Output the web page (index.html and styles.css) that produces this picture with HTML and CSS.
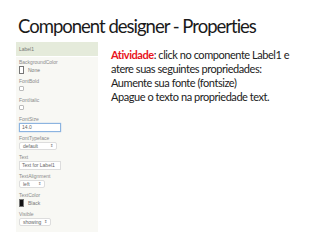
FILE: index.html
```html
<!DOCTYPE html>
<html lang="pt">
<head>
    <meta charset="UTF-8">
    <title>Component designer - Properties</title>
    <link rel="stylesheet" href="styles.css">
</head>
<body>
    <h1 class="title">Component designer - Properties</h1>

    <div class="content">
        <div class="props">
            <div class="props-head">Label1</div>
            <div class="prop">
                <span class="prop-name">BackgroundColor</span>
                <div class="color-row"><span class="swatch"></span>None</div>
            </div>
            <div class="prop">
                <span class="prop-name">FontBold</span>
                <span class="check"></span>
            </div>
            <div class="prop">
                <span class="prop-name">FontItalic</span>
                <span class="check"></span>
            </div>
            <div class="prop">
                <span class="prop-name">FontSize</span>
                <span class="field field-size focus">14.0</span>
            </div>
            <div class="prop">
                <span class="prop-name">FontTypeface</span>
                <span class="select select-face">default <b>&#8661;</b></span>
            </div>
            <div class="prop">
                <span class="prop-name">Text</span>
                <span class="field field-text">Text for Label1</span>
            </div>
            <div class="prop">
                <span class="prop-name">TextAlignment</span>
                <span class="select select-align">left <b>&#8661;</b></span>
            </div>
            <div class="prop">
                <span class="prop-name">TextColor</span>
                <div class="color-row"><span class="swatch black"></span>Black</div>
            </div>
            <div class="prop">
                <span class="prop-name">Visible</span>
                <span class="select select-vis">showing <b>&#8661;</b></span>
            </div>
        </div>

        <div class="task">
            <p><span class="red">Atividade</span>: click no componente Label1 e<br>atere suas seguintes propriedades:</p>
            <p>Aumente sua fonte (fontsize)</p>
            <p>Apague o texto na propriedade text.</p>
        </div>
    </div>
</body>
</html>
```

FILE: styles.css
```css
* {
    margin: 0;
    padding: 0;
    box-sizing: border-box;
}

body {
    font-family: 'Lato', 'Liberation Sans', sans-serif;
    background: #fff;
    color: #222;
    width: 320px;
    height: 240px;
    overflow: hidden;
}

/* Title */
.title {
    font-size: 18.5px;
    letter-spacing: -1px;
    font-weight: normal;
    line-height: 24px;
    padding: 14px 0 0 18px;
    height: 42px;
    color: #1a1a1a;
}

.content {
    display: flex;
}

/* Properties panel */
.props {
    flex-shrink: 0;
    width: 82px;
    margin-left: 16px;
    height: 190px;
    background: #f8f8f4;
    font-family: 'Liberation Sans', sans-serif;
    font-size: 5px;
    color: #555;
}

.props-head {
    background: #e5ebdb;
    height: 15px;
    line-height: 15px;
    padding-left: 3px;
    color: #777;
    border-bottom: 1px solid #fff;
}

.prop {
    display: flex;
    flex-direction: column;
    align-items: flex-start;
    padding: 2px 0 0 3px;
    height: 19px;
}

.prop-name {
    color: #8a8a8a;
    line-height: 7px;
}

.color-row {
    display: flex;
    align-items: center;
    gap: 4px;
    color: #777;
}

.swatch {
    width: 5px;
    height: 8px;
    border: 1px solid #777;
    background: #fff;
}

.swatch.black {
    background: #111;
}

.check {
    width: 5px;
    height: 5px;
    border: 1px solid #bbb;
    border-radius: 1px;
    background: #fff;
    margin-top: 1px;
}

.field {
    height: 9px;
    line-height: 7px;
    padding-left: 2px;
    border: 1px solid #ddd;
    background: #fff;
    color: #666;
}

.field-size {
    width: 42px;
}

.field-text {
    width: 42px;
}

.focus {
    border-color: #8cb4e0;
    box-shadow: 0 0 1px #8cb4e0;
}

.select {
    display: flex;
    justify-content: space-between;
    height: 8px;
    line-height: 6px;
    padding: 0 3px;
    border: 1px solid #ddd;
    border-radius: 2px;
    background: #fff;
    color: #666;
}

.select b {
    font-weight: normal;
    font-size: 4px;
}

.select-face {
    width: 38px;
}

.select-align {
    width: 26px;
}

.select-vis {
    width: 32px;
}

/* Task text */
.task {
    margin-left: 13px;
    padding-top: 6px;
    font-size: 11px;
    letter-spacing: -0.45px;
    line-height: 14px;
    color: #222;
}

.red {
    color: #e8141c;
    font-weight: bold;
}
```
